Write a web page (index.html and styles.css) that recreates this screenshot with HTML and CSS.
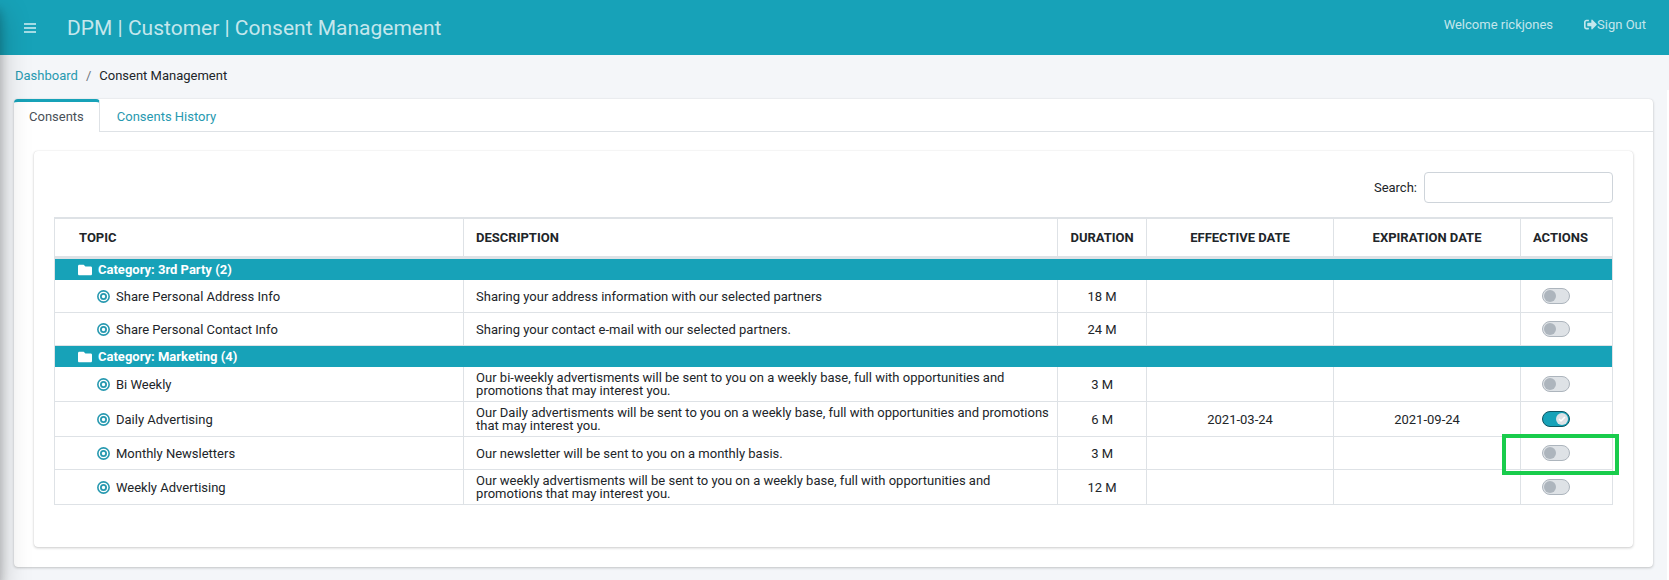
FILE: index.html
```html
<!DOCTYPE html>
<html lang="en">
<head>
<meta charset="utf-8">
<title>Consent Management</title>
<link rel="stylesheet" href="styles.css">
</head>
<body>
<svg class="sprite" aria-hidden="true">
  <symbol id="folder" viewBox="0 0 512 512"><path d="M464 128H272l-64-64H48C21.500 64 0 85.500 0 112v288c0 26.500 21.500 48 48 48h416c26.500 0 48-21.500 48-48V176c0-26.500-21.500-48-48-48z" fill="currentColor"/></symbol>
  <symbol id="target" viewBox="0 0 26 26"><circle cx="13" cy="13" r="11.300" fill="none" stroke="currentColor" stroke-width="3.200"/><circle cx="13" cy="13" r="5.200" fill="none" stroke="currentColor" stroke-width="3.600"/></symbol>
</svg>
<aside class="drawer" aria-hidden="true"></aside>
<aside class="control-panel" aria-hidden="true"></aside>
<header class="topbar">
  <button class="menu" type="button" aria-label="Toggle menu"><svg viewBox="0 0 12 10" width="12" height="10"><path d="M0 1h12M0 5h12M0 9h12" stroke="currentColor" stroke-width="1.700"/></svg></button>
  <h1 class="title">DPM | Customer | Consent Management</h1>
  <span class="welcome">Welcome rickjones</span>
  <a class="signout" href="#"><svg viewBox="0 0 512 512" width="13" height="13" aria-hidden="true"><path d="M497 273L329 441c-15 15-41 4.500-41-17v-96H152c-13.300 0-24-10.700-24-24v-96c0-13.300 10.700-24 24-24h136V88c0-21.400 25.900-32 41-17l168 168c9.300 9.400 9.300 24.600 0 34zM192 436v-40c0-6.600-5.400-12-12-12H96c-17.700 0-32-14.300-32-32V160c0-17.700 14.300-32 32-32h84c6.600 0 12-5.400 12-12V76c0-6.600-5.400-12-12-12H96c-53 0-96 43-96 96v192c0 53 43 96 96 96h84c6.600 0 12-5.400 12-12z" fill="currentColor"/></svg>Sign Out</a>
</header>
<nav class="breadcrumb" aria-label="Breadcrumb"><a href="#">Dashboard</a><span class="slash">/</span><span>Consent Management</span></nav>
<main class="card">
  <nav class="tabs">
    <a class="tab active" href="#">Consents</a>
    <a class="tab" href="#">Consents History</a>
  </nav>
  <section class="panel">
    <div class="filter"><label for="search">Search:</label><input id="search" class="search" type="search"></div>
    <table class="consents">
      <colgroup><col class="c-topic"><col class="c-desc"><col class="c-dur"><col class="c-date"><col class="c-date"><col class="c-act"></colgroup>
      <thead><tr><th class="topic-head">TOPIC</th><th class="left">DESCRIPTION</th><th>DURATION</th><th>EFFECTIVE DATE</th><th>EXPIRATION DATE</th><th class="left">ACTIONS</th></tr></thead>
      <tbody>
        <tr class="category"><td colspan="6"><div class="label"><svg class="folder"><use href="#folder"/></svg>Category: 3rd Party (2)</div></td></tr>
        <tr><td><div class="topic"><svg class="target"><use href="#target"/></svg>Share Personal Address Info</div></td><td class="left">Sharing your address information with our selected partners</td><td>18 M</td><td></td><td></td><td class="action"><input class="toggle" type="checkbox" aria-label="Share Personal Address Info"></td></tr>
        <tr><td><div class="topic"><svg class="target"><use href="#target"/></svg>Share Personal Contact Info</div></td><td class="left">Sharing your contact e-mail with our selected partners.</td><td>24 M</td><td></td><td></td><td class="action"><input class="toggle" type="checkbox" aria-label="Share Personal Contact Info"></td></tr>
        <tr class="category"><td colspan="6"><div class="label"><svg class="folder"><use href="#folder"/></svg>Category: Marketing (4)</div></td></tr>
        <tr><td><div class="topic"><svg class="target"><use href="#target"/></svg>Bi Weekly</div></td><td class="left">Our bi-weekly advertisments will be sent to you on a weekly base, full with opportunities and promotions that may interest you.</td><td>3 M</td><td></td><td></td><td class="action"><input class="toggle" type="checkbox" aria-label="Bi Weekly"></td></tr>
        <tr><td><div class="topic"><svg class="target"><use href="#target"/></svg>Daily Advertising</div></td><td class="left">Our Daily advertisments will be sent to you on a weekly base, full with opportunities and promotions that may interest you.</td><td>6 M</td><td>2021-03-24</td><td>2021-09-24</td><td class="action"><input class="toggle" type="checkbox" aria-label="Daily Advertising" checked></td></tr>
        <tr><td><div class="topic"><svg class="target"><use href="#target"/></svg>Monthly Newsletters</div></td><td class="left">Our newsletter will be sent to you on a monthly basis.</td><td>3 M</td><td></td><td></td><td class="action highlighted"><input class="toggle" type="checkbox" aria-label="Monthly Newsletters"></td></tr>
        <tr><td><div class="topic"><svg class="target"><use href="#target"/></svg>Weekly Advertising</div></td><td class="left">Our weekly advertisments will be sent to you on a weekly base, full with opportunities and promotions that may interest you.</td><td>12 M</td><td></td><td></td><td class="action"><input class="toggle" type="checkbox" aria-label="Weekly Advertising"></td></tr>
      </tbody>
    </table>
  </section>
</main>
</body>
</html>
```

FILE: styles.css
```css
* { box-sizing: border-box; }
body {
  margin: 0;
  min-height: 100vh;
  background: #f4f6f9;
  color: #212529;
  font: 13px/20px Roboto, "Liberation Sans", sans-serif;
}
a { color: #2799b0; text-decoration: none; }
.sprite { position: absolute; width: 0; height: 0; }

.drawer {
  position: fixed;
  z-index: 5;
  top: 0;
  bottom: 0;
  left: -250px;
  width: 250px;
  box-shadow: 0 14px 28px rgba(0, 0, 0, .25), 0 10px 10px rgba(0, 0, 0, .22);
}
.control-panel {
  position: fixed;
  top: 90px;
  right: 0;
  bottom: 0;
  width: 2px;
  background: #fff;
}

.topbar {
  display: flex;
  align-items: center;
  height: 55px;
  padding: 0 23px 0 24px;
  background: #17a2b8;
  color: rgba(255, 255, 255, .75);
}
.menu {
  display: flex;
  padding: 0;
  border: 0;
  background: none;
  color: #d5f0f4;
}
.title {
  flex: 1;
  margin: 0 0 0 31px;
  font-size: 21px;
  font-weight: 400;
  line-height: 28px;
}
.welcome, .signout { padding-bottom: 6px; }
.signout {
  display: flex;
  align-items: center;
  margin-left: 31px;
  color: inherit;
}

.breadcrumb {
  display: flex;
  gap: 8px;
  padding: 11px 15px 13px;
}
.slash { color: #6c757d; }

.card {
  margin: 0 16px 13px 14px;
  padding-bottom: 20px;
  background: #fff;
  border-radius: 4px;
  box-shadow: 0 0 1px rgba(0, 0, 0, .13), 0 1px 3px rgba(0, 0, 0, .2);
}
.tabs {
  display: flex;
  height: 33px;
  border-bottom: 1px solid #dee2e6;
}
.tab {
  height: 33px;
  padding: 5px 17px 4px;
  border-top: 3px solid transparent;
}
.tab.active {
  padding: 5px 15px 4px;
  background: #fff;
  border-top-color: #17a2b8;
  border-right: 1px solid #dee2e6;
  border-radius: 4px 4px 0 0;
  color: #495057;
}

.panel {
  margin: 19px 20px 0;
  padding: 21px 20px 42px;
  border-radius: 4px;
  box-shadow: 0 0 1px rgba(0, 0, 0, .13), 0 1px 3px rgba(0, 0, 0, .2);
}
.filter {
  display: flex;
  align-items: center;
  justify-content: flex-end;
  gap: 7px;
  margin-bottom: 14px;
}
.search {
  width: 189px;
  height: 31px;
  padding: 4px 8px;
  border: 1px solid #ced4da;
  border-radius: 4px;
  background: #fff;
  font: inherit;
}

.consents {
  width: 100%;
  table-layout: fixed;
  border-collapse: separate;
  border-spacing: 0;
  border-top: 1px solid #dee2e6;
  border-left: 1px solid #dee2e6;
}
.c-dur { width: 89px; }
.c-date { width: 12%; }
.c-act { width: 92px; }
.c-desc { width: 594px; }
.consents th {
  height: 41px;
  padding: 0 8px;
  border: 1px solid #dee2e6;
  border-width: 1px 1px 3px 0;
  font-weight: 700;
  white-space: nowrap;
}
.consents td {
  height: 33px;
  padding: 4px 6px;
  border: 1px solid #dee2e6;
  border-width: 0 1px 1px 0;
  line-height: 13px;
  text-align: center;
}
.consents .left { padding-left: 12px; text-align: left; }
.consents .topic-head { padding-left: 24px; text-align: left; }
.consents .category td {
  height: 21px;
  padding: 0 23px;
  border-bottom: 0;
  background: #17a2b8;
  background-clip: padding-box;
  color: #fff;
  font-weight: 700;
}
.label, .topic { display: flex; align-items: center; }
.label { gap: 6px; }
.topic { gap: 6px; padding-left: 36px; }
.folder { width: 14px; height: 14px; }
.target { width: 13px; height: 13px; color: #2799b0; }

.consents .action { padding: 0 0 0 21px; text-align: left; }
.toggle {
  appearance: none;
  display: block;
  width: 28px;
  height: 16px;
  margin: 0;
  padding: 1px;
  border: 1px solid #adb5bd;
  border-radius: 8px;
  background: #dee2e6;
}
.toggle::before {
  content: "";
  display: block;
  width: 12px;
  height: 12px;
  border-radius: 50%;
  background: #adb5bd;
}
.toggle:checked { border-color: #0d5562; background: #17a2b8; }
.toggle:checked::before {
  margin-left: auto;
  background: #dee2e6 url("data:image/svg+xml,%3Csvg xmlns='http://www.w3.org/2000/svg' viewBox='0 0 12 12'%3E%3Cpath d='M3 6l2 2 4-4' fill='none' stroke='white' stroke-width='1.5'/%3E%3C/svg%3E");
}
.highlighted { position: relative; }
.highlighted::after {
  content: "";
  position: absolute;
  inset: -3px -7px -6px -19px;
  border: 4px solid #19cc4c;
  pointer-events: none;
}
```
